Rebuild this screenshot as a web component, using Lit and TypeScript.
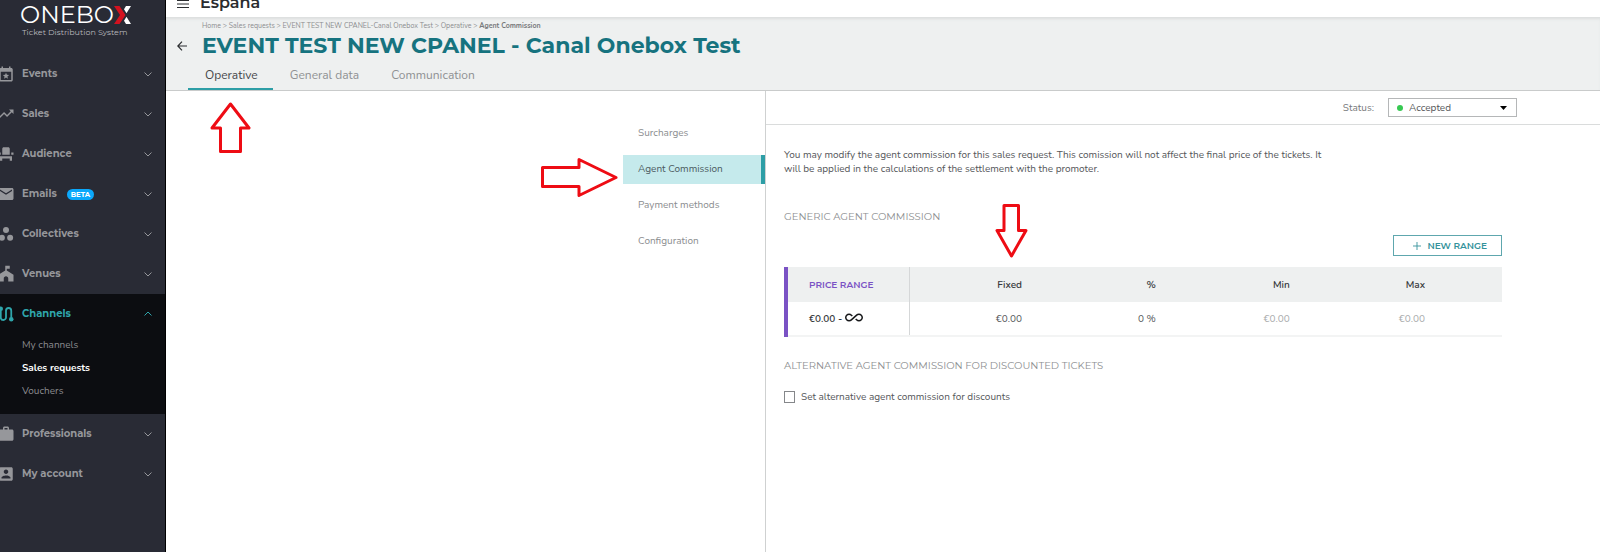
import { LitElement, html, css, svg, nothing } from "lit";
import { customElement, state } from "lit/decorators.js";
import { classMap } from "lit/directives/class-map.js";

const icons: Record<string, unknown> = {
  events: svg`<path fill-rule="evenodd" d="M19 4h-1V2h-2v2H8V2H6v2H5C3.900 4 3 4.900 3 6v14c0 1.100.9 2 2 2h14c1.100 0 2-.9 2-2V6c0-1.100-.9-2-2-2zm0 16H5V9h14v11z"/><path d="M12 10.200l1.200 2.800 3 .3-2.300 2 .7 3-2.600-1.600-2.600 1.600.7-3-2.300-2 3-.3z"/>`,
  sales: svg`<path d="M16 6l2.290 2.290-4.880 4.880-4-4L2 16.590 3.410 18l6-6 4 4 6.300-6.290L22 12V6z"/>`,
  audience: svg`<path d="M4 18v3h3v-3h10v3h3v-6H4v3zm15-8h3v3h-3v-3zM2 10h3v3H2v-3zm15 3H7V5c0-1.100.9-2 2-2h6c1.100 0 2 .9 2 2v8z"/>`,
  emails: svg`<path d="M20 4H4c-1.100 0-1.990.9-1.990 2L2 18c0 1.100.9 2 2 2h16c1.100 0 2-.9 2-2V6c0-1.100-.9-2-2-2zm0 4l-8 5-8-5V6l8 5 8-5v2z"/>`,
  collectives: svg`<circle cx="12" cy="6.500" r="4"/><circle cx="6.500" cy="17" r="4"/><circle cx="17.500" cy="17" r="4"/>`,
  venues: svg`<path d="M11 1h6v4h-4v2.400l9 5.600v9h-7v-4c0-1.700-1.300-3-3-3s-3 1.300-3 3v4H2v-9l9-5.600z"/>`,
  channels: svg`<path fill="none" stroke="currentColor" stroke-width="2.400" d="M5 7v9.500a3.500 3.500 0 0 0 7 0v-9a3.500 3.500 0 0 1 7 0V17"/><circle cx="5" cy="5" r="3"/><circle cx="19" cy="19" r="3"/>`,
  professionals: svg`<path fill-rule="evenodd" d="M20 6h-4V4c0-1.110-.89-2-2-2h-4c-1.110 0-2 .89-2 2v2H4c-1.110 0-1.990.89-1.990 2L2 19c0 1.110.89 2 2 2h16c1.110 0 2-.89 2-2V8c0-1.110-.89-2-2-2zm-6 0h-4V4h4v2z"/>`,
  account: svg`<path fill-rule="evenodd" d="M3 5v14c0 1.100.89 2 2 2h14c1.100 0 2-.9 2-2V5c0-1.100-.9-2-2-2H5c-1.110 0-2 .9-2 2zm12 4c0 1.660-1.340 3-3 3s-3-1.340-3-3 1.340-3 3-3 3 1.340 3 3zm-9 8c0-2 4-3.100 6-3.100s6 1.100 6 3.100v1H6v-1z"/>`,
};

interface Section {
  id: string;
  label: string;
  badge?: string;
  children?: string[];
}

const sections: Section[] = [
  { id: "events", label: "Events" },
  { id: "sales", label: "Sales" },
  { id: "audience", label: "Audience" },
  { id: "emails", label: "Emails", badge: "BETA" },
  { id: "collectives", label: "Collectives" },
  { id: "venues", label: "Venues" },
  { id: "channels", label: "Channels", children: ["My channels", "Sales requests", "Vouchers"] },
  { id: "professionals", label: "Professionals" },
  { id: "account", label: "My account" },
];

@customElement("side-menu")
class SideMenu extends LitElement {
  static styles = css`
    :host { display: block; box-sizing: border-box; background: #292b35; border-right: 1px solid #000; overflow: hidden; font-family: Montserrat, Inter, sans-serif; }
    .logo { display: block; padding: 3px 0 17px 20px; text-decoration: none; color: #fff; }
    .wordmark { display: flex; align-items: center; height: 24px; font: 400 24px/24px Montserrat, Lato, sans-serif; }
    .mark { width: 17px; height: 18px; }
    .tagline { display: block; font: 400 8px/10px Montserrat, Inter, sans-serif; padding-left: 2px; color: #b9babe; }
    .list { list-style: none; margin: 0; padding: 0; }
    .toggle { display: flex; align-items: center; width: 100%; height: 40px; padding: 0 11px 0 0; border: 0; background: none; color: #96979b; font: 700 10px/16px Montserrat, Inter, sans-serif; cursor: pointer; }
    .icon { width: 18px; height: 18px; margin: 0 7px 0 -3px; fill: currentColor; flex: none; }
    .badge { margin-left: 10px; padding: 0 4px; border-radius: 6px; background: #0ba8fb; color: #fff; font-size: 7px; line-height: 11px; }
    .chevron { width: 12px; height: 12px; margin-left: auto; fill: none; stroke: currentColor; stroke-width: 1; }
    .open { background: #0c0d11; padding-bottom: 11px; }
    .open .toggle { color: #2fa5ab; }
    .open .chevron { transform: rotate(180deg); }
    .sub { list-style: none; margin: 0; padding: 0 0 0 22px; }
    .link { display: block; color: #8b8c8f; text-decoration: none; font: 400 10px/23px Nunito, "Open Sans", sans-serif; }
    .current { color: #fff; font-weight: 700; }
  `;

  @state() private open = "channels";

  render() {
    return html`
      <a class="logo" href="#">
        <span class="wordmark">ONEBO<svg class="mark" viewBox="0 0 17 18" aria-hidden="true"><path fill="#d3121f" d="M0 0h5.500l6 9-6 9H0l6-9z"/><path fill="#fff" d="M12 0h5l-4.500 7.200-2.500-4zM12.500 10.800L17 18h-5l-2-3.200z"/></svg></span>
        <span class="tagline">Ticket Distribution System</span>
      </a>
      <nav>
        <ul class="list">
          ${sections.map((s) => {
            const open = s.id === this.open;
            return html`<li class=${classMap({ open })}>
              <button class="toggle" aria-expanded=${open} @click=${() => (this.open = open ? "" : s.id)}>
                <svg class="icon" viewBox="0 0 24 24" aria-hidden="true">${icons[s.id]}</svg>
                ${s.label}${s.badge ? html`<span class="badge">${s.badge}</span>` : nothing}
                <svg class="chevron" viewBox="0 0 12 12" aria-hidden="true"><path d="M2.500 4.500L6 8l3.500-3.500"/></svg>
              </button>
              ${open && s.children
                ? html`<ul class="sub">${s.children.map((c) => html`<li><a href="#" class=${classMap({ link: true, current: c === "Sales requests" })}>${c}</a></li>`)}</ul>`
                : nothing}
            </li>`;
          })}
        </ul>
      </nav>
    `;
  }
}

@customElement("commission-form")
class CommissionForm extends LitElement {
  static styles = css`
    :host { display: block; font: 400 10px/14px Nunito, "Open Sans", sans-serif; color: #55575a; }
    .status { display: flex; justify-content: flex-end; align-items: center; gap: 14px; height: 33px; padding-right: 83px; border-bottom: 1px solid #dadcdc; color: #77797b; }
    .picker { display: flex; align-items: center; box-sizing: border-box; width: 129px; height: 19px; padding: 0 9px 0 8px; border: 1px solid #b5b7b8; }
    .dot { width: 6px; height: 6px; border-radius: 50%; background: #37c952; }
    .select { flex: 1; min-width: 0; margin-left: 6px; padding: 0; border: 0; background: none; appearance: none; color: #55575a; font: inherit; }
    .caret { width: 7px; height: 4px; }
    .body { max-width: 718px; padding: 23px 18px; }
    .intro { margin: 0; max-width: 550px; }
    .heading { margin: 0; color: #8c8e90; font: 400 10px/16px Montserrat, Inter, sans-serif; }
    .first { margin-top: 33px; }
    .actions { display: flex; justify-content: flex-end; margin: 10px 0 11px; }
    .add { display: flex; align-items: center; gap: 6px; height: 21px; padding: 0 14px 0 19px; border: 1px solid #5ea7ae; background: #fff; color: #34929b; font: 600 9px/12px Montserrat, Inter, sans-serif; }
    .plus { width: 8px; height: 8px; stroke: currentColor; fill: none; }
    .table { width: 100%; table-layout: fixed; border-collapse: collapse; margin-bottom: 21px; }
    .table th, .table td { box-sizing: border-box; padding: 0 21px 0 0; text-align: right; }
    .table th { height: 35px; background: #eef0f0; color: #36383b; font-weight: 600; }
    .table td { height: 34px; border-bottom: 2px solid #f3f4f4; }
    .table .range { width: 17.200%; padding: 0 0 0 21px; text-align: left; border-left: 4px solid #7a52c4; border-right: 1px solid #d5d7d8; color: #36383b; }
    .table td.range { font-weight: 600; }
    .table th.range { color: #7a52c4; font: 600 9px/14px Montserrat, Inter, sans-serif; }
    .num { width: 18.700%; }
    .table .last { padding-right: 77px; }
    .table .muted { color: #a9abac; }
    .infinity { width: 18px; height: 9px; fill: #17181a; }
    .check { display: flex; align-items: center; gap: 6px; margin-top: 16px; }
    .box { appearance: none; width: 11px; height: 12px; margin: 0; border: 1px solid #85878a; background: #fff; }
    .box:checked { background: #2d9ea6; }
  `;

  render() {
    return html`
      <div class="status">
        <label for="status">Status:</label>
        <div class="picker">
          <span class="dot"></span>
          <select class="select" id="status"><option>Accepted</option><option>Rejected</option></select>
          <svg class="caret" viewBox="0 0 7 4" aria-hidden="true"><path d="M0 0h7L3.500 4z"/></svg>
        </div>
      </div>
      <div class="body">
        <p class="intro">You may modify the agent commission for this sales request. This comission will not affect the final price of the tickets. It will be applied in the calculations of the settlement with the promoter.</p>
        <h2 class="heading first">GENERIC AGENT COMMISSION</h2>
        <div class="actions">
          <button class="add"><svg class="plus" viewBox="0 0 9 9" aria-hidden="true"><path d="M4.500 0v9M0 4.500h9"/></svg>NEW RANGE</button>
        </div>
        <table class="table">
          <thead><tr><th class="range">PRICE RANGE</th><th class="num">Fixed</th><th class="num">%</th><th class="num">Min</th><th class="last">Max</th></tr></thead>
          <tbody><tr>
            <td class="range">€0.00 - <svg class="infinity" viewBox="0 6 24 12" role="img" aria-label="infinity"><path d="M18.600 6.620c-1.440 0-2.800.56-3.770 1.530L7.800 14.390c-.64.64-1.490.99-2.400.99-1.870 0-3.390-1.510-3.390-3.380S3.530 8.620 5.400 8.620c.91 0 1.760.35 2.440 1.030l1.130 1 1.510-1.340L9.220 8.200A5.370 5.370 0 0 0 5.400 6.620C2.420 6.620 0 9.040 0 12s2.420 5.380 5.400 5.380c1.440 0 2.800-.56 3.770-1.530l7.030-6.240c.64-.64 1.490-.99 2.400-.99 1.870 0 3.390 1.510 3.390 3.380s-1.520 3.380-3.390 3.380c-.9 0-1.760-.35-2.440-1.030l-1.140-1.010-1.510 1.340 1.270 1.120a5.386 5.386 0 0 0 3.820 1.570c2.980 0 5.400-2.410 5.400-5.380s-2.420-5.370-5.400-5.370z"/></svg></td>
            <td>€0.00</td><td>0 %</td><td class="muted">€0.00</td><td class="muted last">€0.00</td>
          </tr></tbody>
        </table>
        <h2 class="heading">ALTERNATIVE AGENT COMMISSION FOR DISCOUNTED TICKETS</h2>
        <label class="check"><input class="box" type="checkbox">Set alternative agent commission for discounts</label>
      </div>
    `;
  }
}

@customElement("app-root")
class AppRoot extends LitElement {
  static styles = css`
    :host { display: grid; grid-template-columns: 166px 1fr; min-height: 100vh; position: relative; background: #fff; font-family: Nunito, "Open Sans", sans-serif; }
    .page { display: flex; flex-direction: column; min-width: 0; }
    .topbar { display: flex; align-items: flex-end; gap: 11px; height: 17px; padding-left: 11px; box-sizing: border-box; overflow: hidden; }
    .icon-button { display: flex; padding: 0; border: 0; background: none; color: #2b2d30; }
    .menu { width: 12px; height: 8px; margin-bottom: 9px; stroke: currentColor; }
    .org { margin-bottom: 3px; color: #2b2d30; font: 600 16px/22px Montserrat, Inter, sans-serif; }
    .header { padding: 1px 0 0 11px; background: #eef0f0; border-bottom: 1px solid #c9cbcb; box-shadow: inset 0 3px 3px -1px #dcdede; }
    .crumbs { padding: 3px 0 0 25px; color: #8b8d8f; font-size: 7px; line-height: 10px; }
    .crumb { color: inherit; text-decoration: none; }
    .here { color: #77797b; font-weight: 700; }
    .titles { display: flex; align-items: center; gap: 15px; }
    .back { width: 10px; height: 10px; fill: none; stroke: currentColor; stroke-width: 1.200; }
    .title { margin: 0; color: #16737f; font: 700 22px/30px Montserrat, Inter, sans-serif; }
    .tabs { display: flex; padding-left: 11px; }
    .tab { padding: 5px 15px 4px 17px; border-bottom: 2px solid transparent; color: #8f9193; font-size: 12px; line-height: 18px; text-decoration: none; }
    .active { border-color: #2d9ea6; color: #45474a; }
    .split { display: grid; grid-template-columns: 600fr 834fr; flex: 1; }
    .side { display: flex; flex-direction: column; align-items: flex-end; gap: 7px; padding-top: 28px; border-right: 1px solid #cfd1d1; }
    .step { box-sizing: border-box; width: 142px; padding-left: 15px; color: #8b8d8f; font-size: 10px; line-height: 29px; text-decoration: none; }
    .chosen { background: #c5eaec; border-right: 4px solid #2d9ea6; color: #4b5b5f; }
    .pointer { position: absolute; fill: #fff; stroke: #ee0c14; stroke-width: 3; stroke-linejoin: round; }
    .to-tab { left: 210px; top: 101px; width: 41px; height: 53px; }
    .to-step { left: 540px; top: 157px; width: 79px; height: 40px; }
    .to-fixed { left: 995px; top: 203px; width: 33px; height: 56px; }
  `;

  @state() private tab = "Operative";
  @state() private step = "Agent Commission";

  render() {
    return html`
      <side-menu></side-menu>
      <div class="page">
        <div class="topbar">
          <button class="icon-button" aria-label="Menu"><svg class="menu" viewBox="0 0 12 8"><path d="M0 .5h12M0 4h12M0 7.500h12"/></svg></button>
          <span class="org">España</span>
        </div>
        <header class="header">
          <nav class="crumbs" aria-label="Breadcrumb">
            <a class="crumb" href="#">Home</a> &gt; <a class="crumb" href="#">Sales requests</a> &gt; <a class="crumb" href="#">EVENT TEST NEW CPANEL-Canal Onebox Test</a> &gt; <a class="crumb" href="#">Operative</a> &gt; <span class="here">Agent Commission</span>
          </nav>
          <div class="titles">
            <button class="icon-button" aria-label="Back"><svg class="back" viewBox="0 0 10 10"><path d="M10 5H.8M5 .6L.8 5 5 9.400"/></svg></button>
            <h1 class="title">EVENT TEST NEW CPANEL - Canal Onebox Test</h1>
          </div>
          <nav class="tabs">
            ${["Operative", "General data", "Communication"].map(
              (t) => html`<a href="#" class=${classMap({ tab: true, active: t === this.tab })} @click=${() => (this.tab = t)}>${t}</a>`,
            )}
          </nav>
        </header>
        <div class="split">
          <nav class="side">
            ${["Surcharges", "Agent Commission", "Payment methods", "Configuration"].map(
              (s) => html`<a href="#" class=${classMap({ step: true, chosen: s === this.step })} @click=${() => (this.step = s)}>${s}</a>`,
            )}
          </nav>
          <commission-form></commission-form>
        </div>
      </div>
      <svg class="pointer to-tab" viewBox="0 0 41 53" aria-hidden="true"><path d="M20.500 3L39 27h-8.500v23.500h-20V27H2z"/></svg>
      <svg class="pointer to-step" viewBox="0 0 79 40" aria-hidden="true"><path d="M2.500 10.500H39V2.500L76 20.500 39 38.500V29.500H2.500z"/></svg>
      <svg class="pointer to-fixed" viewBox="0 0 33 56" aria-hidden="true"><path d="M9 2.500h14.500V27.500H31L16.500 53 2 27.500h7z"/></svg>
    `;
  }
}
